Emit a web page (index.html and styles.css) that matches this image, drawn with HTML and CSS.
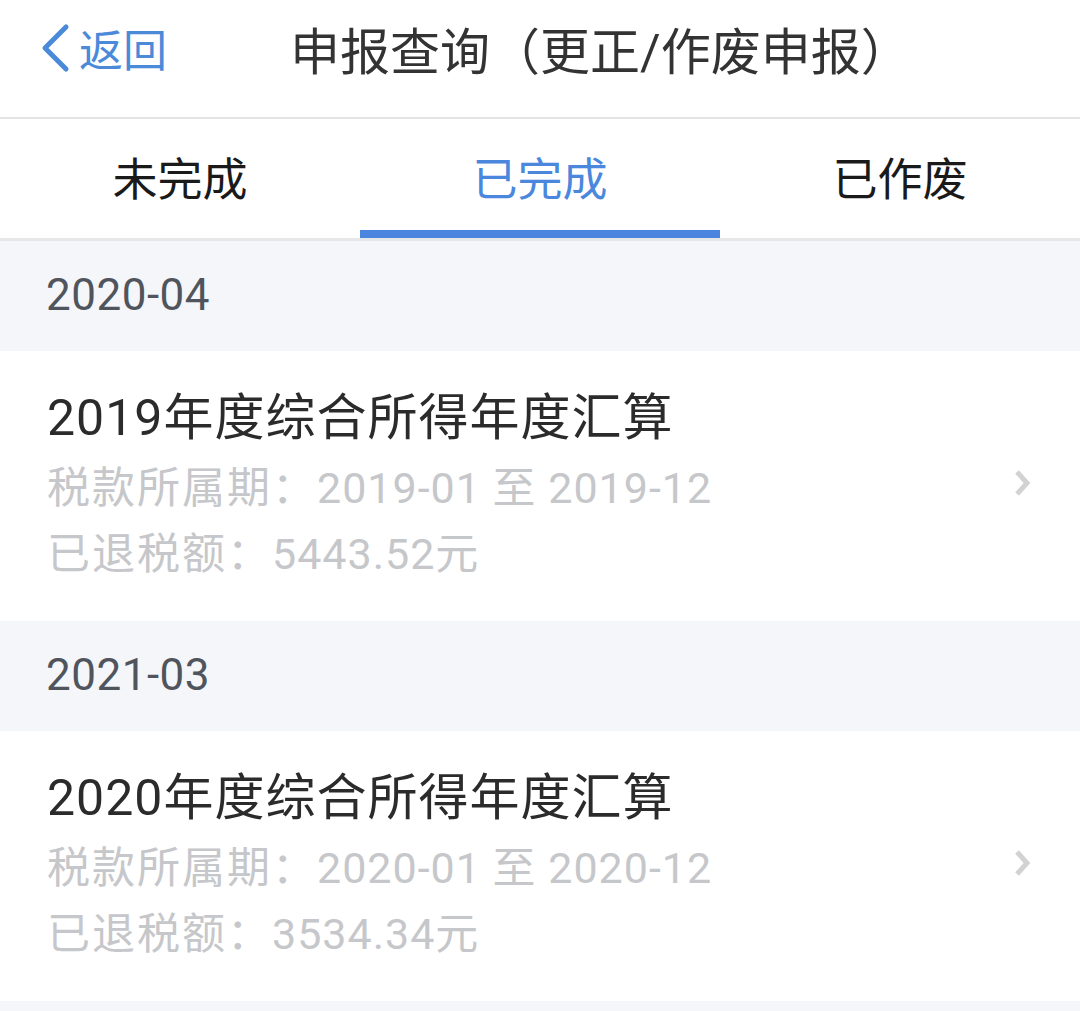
FILE: index.html
```html
<!DOCTYPE html>
<html lang="zh-CN">
<head>
    <meta charset="UTF-8">
    <meta name="viewport" content="width=device-width, initial-scale=1.0">
    <title>申报查询（更正/作废申报）</title>
    <link rel="stylesheet" href="styles.css">
</head>
<body>
    <div class="nav-bar">
        <a class="back" href="#">
            <svg class="back-icon" width="30" height="50" viewBox="0 0 30 50">
                <path d="M25 4 L4 25 L25 46" fill="none" stroke="#4b8ad9" stroke-width="5" stroke-linecap="round" stroke-linejoin="round"/>
            </svg>
            <span>返回</span>
        </a>
        <div class="nav-title">申报查询（更正/作废申报）</div>
    </div>

    <div class="tabs">
        <div class="tab">未完成</div>
        <div class="tab active">已完成</div>
        <div class="tab">已作废</div>
    </div>

    <div class="group-date">2020-04</div>
    <div class="record">
        <div class="record-body">
            <div class="record-title">2019年度综合所得年度汇算</div>
            <div class="record-line"><span class="label">税款所属期：</span>2019-01 至 2019-12</div>
            <div class="record-line"><span class="label">已退税额：</span>5443.52元</div>
        </div>
        <svg class="arrow" width="18" height="28" viewBox="0 0 18 28">
            <path d="M3 3 L13 14 L3 25" fill="none" stroke="#d2d2d4" stroke-width="5"/>
        </svg>
    </div>

    <div class="group-date">2021-03</div>
    <div class="record">
        <div class="record-body">
            <div class="record-title">2020年度综合所得年度汇算</div>
            <div class="record-line"><span class="label">税款所属期：</span>2020-01 至 2020-12</div>
            <div class="record-line"><span class="label">已退税额：</span>3534.34元</div>
        </div>
        <svg class="arrow" width="18" height="28" viewBox="0 0 18 28">
            <path d="M3 3 L13 14 L3 25" fill="none" stroke="#d2d2d4" stroke-width="5"/>
        </svg>
    </div>
</body>
</html>
```

FILE: styles.css
```css
body {
    margin: 0;
    padding: 0;
    background: #f4f6f9;
    font-family: Roboto, "Noto Sans CJK SC", sans-serif;
}
.nav-bar {
    display: flex;
    align-items: center;
    height: 119px;
    background: #fff;
    border-bottom: 2px solid #e3e4e6;
    box-sizing: border-box;
    padding-bottom: 22px;
}
.back {
    display: flex;
    align-items: center;
    margin-left: 41px;
    color: #4b8ad9;
    text-decoration: none;
    font-size: 44px;
}
.back-icon {
    margin-right: 8px;
}
.nav-title {
    margin-left: 123px;
    font-size: 50px;
    color: #333;
}
.tabs {
    display: flex;
    height: 122px;
    background: #fff;
    border-bottom: 3px solid #e6e7e9;
    box-sizing: border-box;
}
.tab {
    flex: 1;
    display: flex;
    align-items: center;
    justify-content: center;
    font-size: 45px;
    color: #1a1a1a;
    padding-top: 4px;
    padding-bottom: 8px;
    box-sizing: border-box;
}
.tab.active {
    color: #4a87dd;
    border-bottom: 8px solid #4a86e0;
    padding-bottom: 0;
}
.group-date {
    height: 110px;
    display: flex;
    align-items: center;
    padding-left: 46px;
    padding-bottom: 2px;
    box-sizing: border-box;
    font-size: 44px;
    letter-spacing: 0.5px;
    color: #50545c;
    background: #f4f6f9;
}
.record {
    display: flex;
    align-items: center;
    background: #fff;
    height: 270px;
    padding: 0 48px 0 47px;
    box-sizing: border-box;
}
.record-body {
    flex: 1;
}
.record-title {
    font-size: 50px;
    letter-spacing: 1px;
    color: #2b2b2b;
    line-height: 66px;
    margin-bottom: 4px;
}
.record-line {
    font-size: 43px;
    letter-spacing: 1px;
    color: #c6c7ca;
    line-height: 66px;
}
.record-line .label {
    letter-spacing: 2px;
}
.arrow {
    margin-top: -6px;
}
```
